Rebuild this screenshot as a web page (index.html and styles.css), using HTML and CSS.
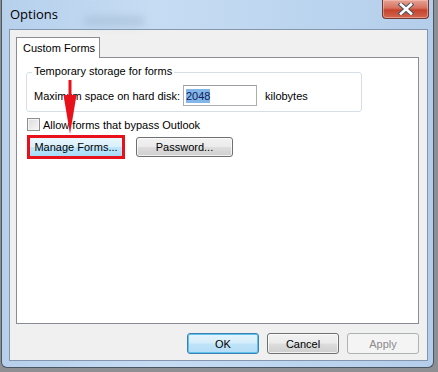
FILE: index.html
```html
<!DOCTYPE html>
<html lang="en">
<head>
    <meta charset="UTF-8">
    <title>Options</title>
    <link rel="stylesheet" href="styles.css">
</head>
<body>
    <div class="window">
        <!-- Title bar -->
        <div class="titlebar">
            <span class="title">Options</span>
            <div class="smudge"></div>
            <button class="close">
                <svg width="16" height="12" viewBox="0 0 16 12">
                    <path d="M3 1.5 L13 10.5 M13 1.5 L3 10.5" stroke="#4a5460" stroke-width="4.6" stroke-linecap="square" fill="none"/>
                    <path d="M3 1.5 L13 10.5 M13 1.5 L3 10.5" stroke="#fff" stroke-width="2.6" stroke-linecap="square" fill="none"/>
                </svg>
            </button>
        </div>

        <div class="client">
            <div class="tabs">
                <div class="tab">Custom Forms</div>
            </div>

            <div class="panel">
                <div class="group">
                    <span class="legend">Temporary storage for forms</span>
                    <div class="row">
                        <span class="label">Maximum space on hard disk:</span>
                        <span class="textbox"><span class="selected">2048</span></span>
                        <span class="unit">kilobytes</span>
                    </div>
                </div>

                <div class="check">
                    <span class="box"></span>
                    <span>Allow forms that bypass Outlook</span>
                </div>

                <div class="btn-row">
                    <span class="highlight">
                        <button class="btn hot">Manage Forms...</button>
                    </span>
                    <button class="btn wide">Password...</button>
                </div>

                <!-- red arrow pointing at the button -->
                <svg class="arrow" width="16" height="56" viewBox="0 0 16 56">
                    <rect x="6.5" y="0" width="3" height="18" fill="#e8101a"/>
                    <polygon points="1.5,15 14.5,15 8,54" fill="#e8101a"/>
                </svg>
            </div>

            <div class="footer">
                <button class="btn default">OK</button>
                <button class="btn">Cancel</button>
                <button class="btn" disabled>Apply</button>
            </div>
        </div>
    </div>
</body>
</html>
```

FILE: styles.css
```css
* {
    margin: 0;
    padding: 0;
    box-sizing: border-box;
}

body {
    width: 438px;
    height: 372px;
    overflow: hidden;
    background: #8d8f93;
    font-family: "Liberation Sans", Arial, sans-serif;
    font-size: 11px;
    color: #000;
}

.window {
    position: relative;
    width: 433px;
    height: 368px;
    margin-left: 1px;
    padding: 0 5px 6px 7px;
    border: 1px solid #4b5563;
    border-top: none;
    border-radius: 0 0 6px 6px;
    background: linear-gradient(to right, #b6d0ec, #c6dcf3 35%, #bcd5ef 70%, #b4cdea);
    display: flex;
    flex-direction: column;
}

/* Title bar */
.titlebar {
    height: 29px;
    display: flex;
    align-items: flex-start;
    position: relative;
}

.title {
    font-family: "Open Sans", "Noto Sans", sans-serif;
    font-size: 13px;
    color: #000;
    margin-top: 5px;
    margin-left: 1px;
}

.smudge {
    position: absolute;
    left: 75px;
    top: 17px;
    width: 60px;
    height: 8px;
    background: #9fb6cf;
    filter: blur(4px);
    opacity: 0.6;
}

.close {
    margin-left: auto;
    margin-right: -1px;
    width: 47px;
    height: 19px;
    border: 1px solid #6d3b33;
    border-top: none;
    border-radius: 0 0 4px 4px;
    background: linear-gradient(#e4a496, #d8705e 45%, #c5432c 55%, #d2664f);
    box-shadow: inset 0 0 0 1px rgba(255, 200, 190, 0.5);
    display: flex;
    align-items: center;
    justify-content: center;
}

.close svg {
    display: block;
}

/* Client area */
.client {
    flex: 1;
    background: #f0f0f0;
    border: 1px solid #8396ad;
    padding: 7px 8px 0 6px;
    display: flex;
    flex-direction: column;
}

.tabs {
    display: flex;
    height: 20px;
    position: relative;
    z-index: 1;
}

.tab {
    width: 84px;
    height: 21px;
    background: #fff;
    border: 1px solid #898c95;
    border-bottom: none;
    padding: 4px 0 0 6px;
}

.panel {
    position: relative;
    height: 267px;
    background: #fff;
    border: 1px solid #898c95;
    padding: 14px 0 0 9px;
}

/* Group box */
.group {
    position: relative;
    width: 336px;
    height: 40px;
    border: 1px solid #d5dfe5;
    border-radius: 3px;
    padding: 12px 0 0 7px;
}

.legend {
    position: absolute;
    left: 5px;
    top: -8px;
    background: #fff;
    padding: 0 2px;
}

.row {
    display: flex;
    align-items: center;
}

.label {
    width: 149px;
}

.textbox {
    width: 74px;
    height: 21px;
    border: 1px solid #abadb3;
    border-top-color: #9a9ca3;
    display: flex;
    align-items: center;
    padding-left: 2px;
}

.selected {
    background: #82b5e8;
    color: #10205a;
    padding: 1px 0;
}

.unit {
    margin-left: 8px;
}

/* Checkbox */
.check {
    display: flex;
    align-items: center;
    gap: 3px;
    margin-top: 6px;
    margin-left: 1px;
}

.box {
    width: 13px;
    height: 13px;
    border: 1px solid #8f8f8f;
    background: linear-gradient(135deg, #dcdcdc, #f6f6f6);
    box-shadow: inset 0 0 0 1px #f4f4f4;
}

/* Buttons */
.btn-row {
    display: flex;
    align-items: center;
    gap: 11px;
    margin-top: 4px;
    margin-left: 1px;
}

.highlight {
    display: block;
    border: 3px solid #e8101a;
    padding: 0;
    width: 98px;
    height: 24px;
}

.btn {
    font-family: "Liberation Sans", Arial, sans-serif;
    font-size: 11px;
    color: #000;
    width: 72px;
    height: 21px;
    border: 1px solid #707070;
    border-radius: 3px;
    background: linear-gradient(#f2f2f2, #ebebeb 48%, #dddddd 52%, #cfcfcf);
    box-shadow: inset 0 0 0 1px rgba(255, 255, 255, 0.7);
}

.btn.wide {
    width: 97px;
    height: 20px;
}

.btn.hot {
    width: 92px;
    height: 18px;
    border: none;
    border-radius: 0;
    background: linear-gradient(#eaf6fd, #d9f0fc 48%, #bee6fd 52%, #a7d9f5);
    box-shadow: none;
}

.btn.default {
    border-color: #3c7fb1;
    background: linear-gradient(#e5f4fc, #d4edfa 48%, #bfe3f8 52%, #b4ddf6);
    box-shadow: inset 0 0 0 1px #5fc1ee;
}

.btn:disabled {
    color: #8a8a8a;
    border-color: #adb2b5;
    background: #f4f4f4;
    box-shadow: none;
}

.arrow {
    position: absolute;
    left: 45px;
    top: 22px;
}

.footer {
    display: flex;
    justify-content: flex-end;
    gap: 8px;
    margin-top: 9px;
}
```
